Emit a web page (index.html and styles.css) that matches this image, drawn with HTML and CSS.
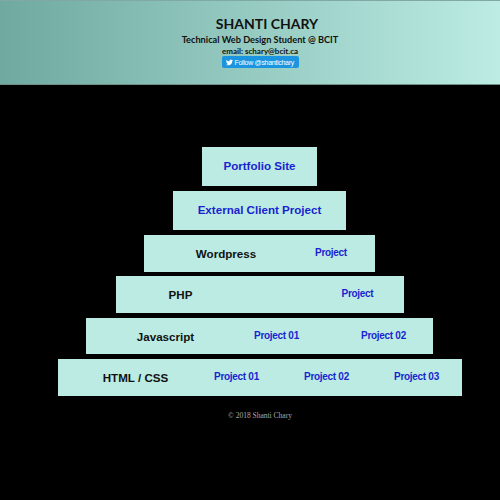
FILE: index.html
```html
<!DOCTYPE html>
<html lang="en">
<head>
  <meta charset="UTF-8">
  <title>Shanti Chary</title>
  <meta name="viewport" content="width=device-width, initial-scale=1">
  <link rel="stylesheet" href="styles.css">
</head>
<body>

<header class="site-header">
  <h1>SHANTI CHARY</h1>
  <h2>Technical Web Design Student @ BCIT</h2>
  <p class="email">email: schary@bcit.ca</p>
  <a class="follow-btn" href="#">
    <svg class="bird" viewBox="0 0 24 24"><path d="M23.953 4.57a10 10 0 01-2.825.775 4.958 4.958 0 002.163-2.723c-.951.555-2.005.959-3.127 1.184a4.92 4.92 0 00-8.384 4.482C7.69 8.095 4.067 6.13 1.64 3.162a4.822 4.822 0 00-.666 2.475c0 1.71.87 3.213 2.188 4.096a4.904 4.904 0 01-2.228-.616v.06a4.923 4.923 0 003.946 4.827 4.996 4.996 0 01-2.212.085 4.936 4.936 0 004.604 3.417 9.867 9.867 0 01-6.102 2.105c-.39 0-.779-.023-1.17-.067a13.995 13.995 0 007.557 2.209c9.053 0 13.998-7.496 13.998-13.985 0-.21 0-.42-.015-.63A9.935 9.935 0 0024 4.59z"/></svg>
    <span>Follow @shantichary</span>
  </a>
</header>

<main class="pyramid">
  <div class="tier tier-1"><a class="big" href="#">Portfolio Site</a></div>
  <div class="tier tier-2"><a class="big" href="#">External Client Project</a></div>
  <div class="tier tier-3">
    <span class="skill">Wordpress</span>
    <a href="#">Project</a>
  </div>
  <div class="tier tier-4">
    <span class="skill">PHP</span>
    <a href="#">Project</a>
  </div>
  <div class="tier tier-5">
    <span class="skill">Javascript</span>
    <a href="#">Project 01</a>
    <a href="#">Project 02</a>
  </div>
  <div class="tier tier-6">
    <span class="skill">HTML / CSS</span>
    <a href="#">Project 01</a>
    <a href="#">Project 02</a>
    <a href="#">Project 03</a>
  </div>
</main>

<footer class="site-footer">© 2018 Shanti Chary</footer>

</body>
</html>
```

FILE: styles.css
```css
html, body {
  margin: 0;
  padding: 0;
}

body {
  background: #000;
  font-family: "Liberation Sans", Arial, sans-serif;
  overflow: hidden;
}

.site-header {
  height: 85px;
  box-sizing: border-box;
  padding: 14px 0 0 20px;
  background: linear-gradient(to right, #6fa99f, #bcece4);
  border-top: 1px solid #7fa9a2;
  border-bottom: 1px solid #6d8f89;
  text-align: center;
  color: #111;
  font-family: "Comic Sans MS", Lato, sans-serif;
}

.site-header h1 {
  margin: 0;
  padding-left: 14px;
  font-size: 14px;
  line-height: 17px;
  font-weight: bold;
}

.site-header h2 {
  margin: 0;
  padding-top: 2px;
  font-size: 9.2px;
  line-height: 12px;
  font-weight: bold;
}

.email {
  margin: 0;
  padding-top: 1px;
  font-size: 8px;
  line-height: 9px;
  font-weight: bold;
}

.follow-btn {
  display: inline-flex;
  align-items: center;
  gap: 2px;
  width: 77px;
  height: 12px;
  box-sizing: border-box;
  padding-left: 4px;
  background: #1b95e0;
  border-radius: 2px;
  color: #fff;
  font-family: "Liberation Sans", Arial, sans-serif;
  font-size: 7px;
  letter-spacing: -0.3px;
  text-decoration: none;
  white-space: nowrap;
  vertical-align: top;
}

.bird {
  flex: none;
  width: 7px;
  height: 7px;
  fill: #fff;
}

.pyramid {
  display: flex;
  flex-direction: column;
  align-items: center;
  padding: 62px 0 0 19px;
  gap: 5px;
}

.tier {
  display: grid;
  align-items: center;
  justify-items: center;
  background: #bbebe3;
  height: 37px;
  box-sizing: border-box;
}

.tier a {
  color: #1a1fd0;
  font-size: 10px;
  letter-spacing: -0.3px;
  font-weight: bold;
  text-decoration: none;
  margin-bottom: 2px;
}

.tier a.big {
  font-size: 11.6px;
  letter-spacing: 0;
}

.skill {
  color: #111;
  font-size: 11.6px;
  font-weight: bold;
}

.tier-1 { width: 115px; height: 39px; }
.tier-2 { width: 173px; height: 39px; }
.tier-3 { width: 231px; grid-template-columns: 164px 46px; }
.tier-4 { width: 288px; margin-top: -1px; grid-template-columns: 130px 224px; }
.tier-5 { width: 347px; height: 36px; grid-template-columns: 137px 107px 107px; }
.tier-6 { width: 404px; grid-template-columns: 134px 90px 90px 90px; }

.tier-5 .skill, .tier-6 .skill {
  padding-left: 22px;
}

.site-footer {
  margin-top: 15px;
  padding-left: 20px;
  text-align: center;
  color: #aaa;
  font-family: "Liberation Serif", serif;
  font-size: 7.5px;
}
```
